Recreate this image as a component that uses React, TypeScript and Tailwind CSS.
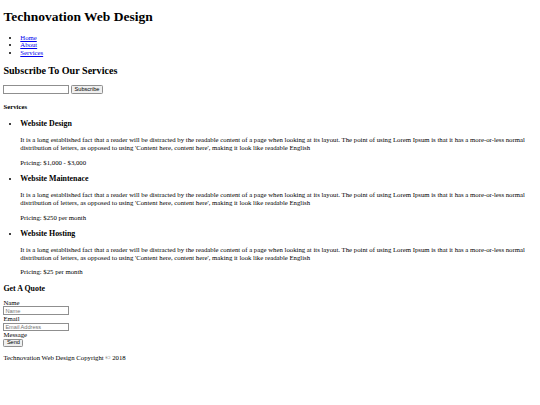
export default function App() {
  const services = [
    { title: "Website Design", price: "Pricing: $1,000 - $3,000" },
    { title: "Website Maintenace", price: "Pricing: $250 per month" },
    { title: "Website Hosting", price: "Pricing: $25 per month" },
  ];
  const blurb =
    "It is a long established fact that a reader will be distracted by the readable content of a page when looking at its layout. The point of using Lorem Ipsum is that it has a more-or-less normal distribution of letters, as opposed to using 'Content here, content here', making it look like readable English";

  const inputCls =
    "w-[66px] h-[8.5px] px-[1px] border-[0.8px] border-[#8f8f8f] bg-white font-['Liberation_Sans',Arial,sans-serif] text-[5.6px] leading-none text-black placeholder:text-[#757575] outline-none align-bottom";
  const btnCls =
    "h-[8.5px] px-[2.5px] rounded-[1.3px] border-[0.8px] border-[#8f8f8f] bg-[#efefef] font-['Liberation_Sans',Arial,sans-serif] text-[5.6px] leading-none text-black align-bottom";

  return (
    <div className="min-h-screen bg-white text-black px-[3.4px] pb-[3.4px] font-['Liberation_Serif','Times_New_Roman',serif] text-[6.75px] leading-[1.15] flow-root">
      <h1 className="my-[9.05px] text-[13.5px] font-bold leading-[1.15]">Technovation Web Design</h1>

      <ul className="my-[6.75px] pl-[16.9px] list-disc">
        <li><a href="#" className="text-[#0000ee] underline">Home</a></li>
        <li><a href="#" className="text-[#0000ee] underline">About</a></li>
        <li><a href="#" className="text-[#0000ee] underline">Services</a></li>
      </ul>

      <h2 className="my-[8.4px] text-[10.1px] font-bold leading-[1.15]">Subscribe To Our Services</h2>

      <form className="flex items-center gap-[1.7px]">
        <input type="text" className={inputCls} />
        <button type="button" className={btnCls}>Subscribe</button>
      </form>

      <h4 className="my-[9px] text-[6.75px] font-bold">Services</h4>

      <ul className="my-[6.75px] pl-[16.9px] list-disc">
        {services.map((s) => (
          <li key={s.title}>
            <h3 className="my-[7.9px] text-[7.9px] font-bold leading-[1.15]">{s.title}</h3>
            <p className="my-[6.75px]">{blurb}</p>
            <p className="my-[6.75px]">{s.price}</p>
          </li>
        ))}
      </ul>

      <h3 className="mt-[7.9px] mb-[5.5px] text-[7.9px] font-bold leading-[1.15]">Get A Quote</h3>

      <form className="flex flex-col items-start">
        <label>Name</label>
        <input type="text" placeholder="Name" className={inputCls} />
        <label>Email</label>
        <input type="text" placeholder="Email Address" className={inputCls} />
        <label>Message</label>
        <button type="button" className={btnCls}>Send</button>
      </form>

      <p className="my-[6.75px]">Technovation Web Design Copyright © 2018</p>
    </div>
  );
}
